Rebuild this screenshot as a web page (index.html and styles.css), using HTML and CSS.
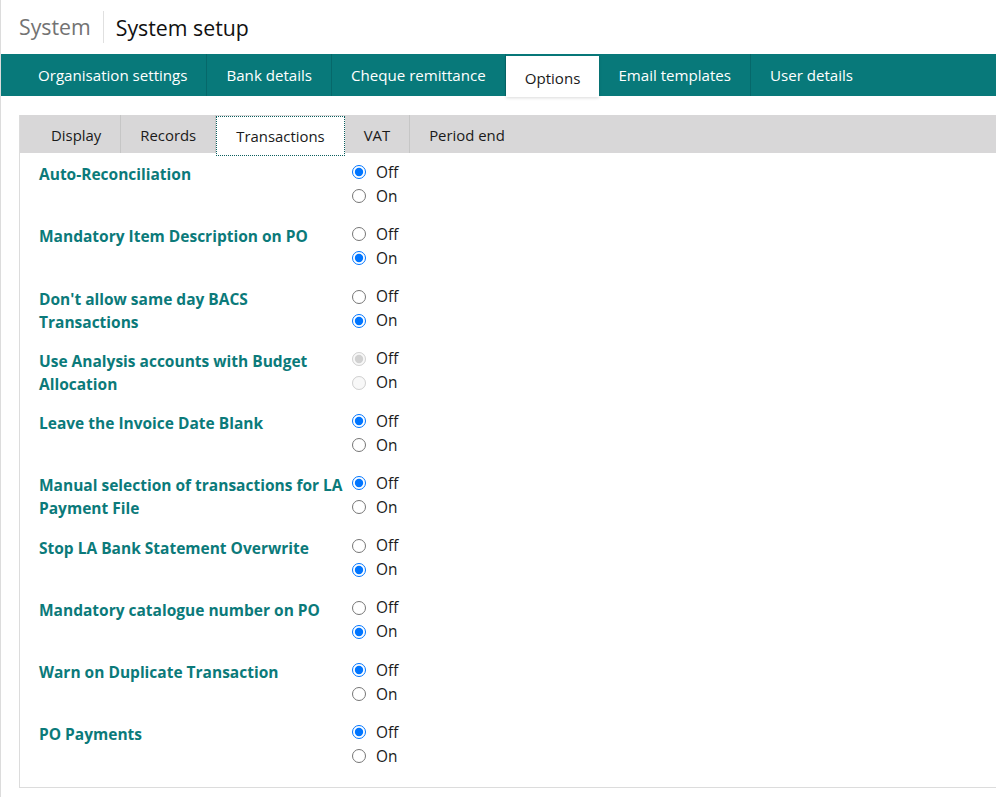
FILE: index.html
```html
<!DOCTYPE html>
<html>
    <head>
        <meta http-equiv=Content-Type content=text/html;charset=UTF-8>
        <title>System setup</title>
        <link rel="stylesheet" href="styles.css">
    </head>
    <body>
        <div class=page>
            <div class=header>
                <span class=section>System</span>
                <h1>System setup</h1>
            </div>
            <ul class=nav>
                <li>Organisation settings</li>
                <li>Bank details</li>
                <li>Cheque remittance</li>
                <li class=active>Options</li>
                <li>Email templates</li>
                <li>User details</li>
            </ul>
            <div class=panel>
                <ul class=subnav>
                    <li>Display</li>
                    <li>Records</li>
                    <li class=active>Transactions</li>
                    <li>VAT</li>
                    <li>Period end</li>
                </ul>
                <div class=options>
                    <div class=option>
                        <span class=name>Auto-Reconciliation</span>
                        <div class=choices>
                            <label><input type=radio name=o1 checked> Off</label>
                            <label><input type=radio name=o1> On</label>
                        </div>
                    </div>
                    <div class=option>
                        <span class=name>Mandatory Item Description on PO</span>
                        <div class=choices>
                            <label><input type=radio name=o2> Off</label>
                            <label><input type=radio name=o2 checked> On</label>
                        </div>
                    </div>
                    <div class=option>
                        <span class=name>Don't allow same day BACS Transactions</span>
                        <div class=choices>
                            <label><input type=radio name=o3> Off</label>
                            <label><input type=radio name=o3 checked> On</label>
                        </div>
                    </div>
                    <div class=option>
                        <span class=name>Use Analysis accounts with Budget Allocation</span>
                        <div class=choices>
                            <label><input type=radio name=o4 checked disabled> Off</label>
                            <label><input type=radio name=o4 disabled> On</label>
                        </div>
                    </div>
                    <div class=option>
                        <span class=name>Leave the Invoice Date Blank</span>
                        <div class=choices>
                            <label><input type=radio name=o5 checked> Off</label>
                            <label><input type=radio name=o5> On</label>
                        </div>
                    </div>
                    <div class=option>
                        <span class=name>Manual selection of transactions for LA Payment File</span>
                        <div class=choices>
                            <label><input type=radio name=o6 checked> Off</label>
                            <label><input type=radio name=o6> On</label>
                        </div>
                    </div>
                    <div class=option>
                        <span class=name>Stop LA Bank Statement Overwrite</span>
                        <div class=choices>
                            <label><input type=radio name=o7> Off</label>
                            <label><input type=radio name=o7 checked> On</label>
                        </div>
                    </div>
                    <div class=option>
                        <span class=name>Mandatory catalogue number on PO</span>
                        <div class=choices>
                            <label><input type=radio name=o8> Off</label>
                            <label><input type=radio name=o8 checked> On</label>
                        </div>
                    </div>
                    <div class=option>
                        <span class=name>Warn on Duplicate Transaction</span>
                        <div class=choices>
                            <label><input type=radio name=o9 checked> Off</label>
                            <label><input type=radio name=o9> On</label>
                        </div>
                    </div>
                    <div class=option>
                        <span class=name>PO Payments</span>
                        <div class=choices>
                            <label><input type=radio name=o10 checked> Off</label>
                            <label><input type=radio name=o10> On</label>
                        </div>
                    </div>
                </div>
            </div>
        </div>
    </body>
</html>
```

FILE: styles.css
```css
body {
    margin: 0;
    font: 15.4px "Open Sans", "Noto Sans", sans-serif;
    color: #1a1a1a;
}
.page {
    border-left: 1px solid #dcdcdc;
    min-height: 797px;
    box-sizing: border-box;
}
.header {
    display: flex;
    align-items: center;
    height: 54px;
    padding-left: 18px;
}
.section {
    font-size: 21.3px;
    color: #737373;
    padding-right: 12px;
    border-right: 1px solid #e0e0e0;
    line-height: 32px;
}
.header h1 {
    margin: 0 0 0 12px;
    font-size: 21.3px;
    font-weight: normal;
    color: #111;
}
.nav {
    display: flex;
    margin: 0;
    padding: 0 0 0 18px;
    list-style: none;
    height: 42px;
    background-color: #08797a;
    font-size: 15.1px;
}
.nav li {
    padding: 0 19px;
    line-height: 42px;
    color: white;
    border-right: 1px solid #06686a;
}
.nav li:last-child {
    border-right: none;
}
.nav li.active {
    background-color: white;
    color: #1a1a1a;
    margin-top: 2px;
    line-height: 44px;
    height: 41px;
    box-shadow: 0 1px 3px rgba(0, 0, 0, 0.15);
    border-right: none;
}
.panel {
    margin: 19px 0 0 18px;
    border-left: 1px solid #dcdcdc;
    border-bottom: 1px solid #dcdcdc;
}
.subnav {
    display: flex;
    margin: 0;
    padding: 0 0 0 12px;
    list-style: none;
    height: 38px;
    background-color: #d8d7d8;
    font-size: 14.9px;
}
.subnav li {
    padding: 0 19px;
    line-height: 41px;
    border-right: 1px solid #c6c6c6;
}
.subnav li:last-child {
    border-right: none;
}
.subnav li.active {
    background-color: white;
    border: 1px dotted #0b5e5e;
    margin-top: 1px;
    height: 38px;
    line-height: 39px;
}
.options {
    padding: 7px 0 4px 19px;
}
.option {
    display: grid;
    grid-template-columns: 313px auto;
    margin-bottom: 14.25px;
}
.name {
    font-size: 15.5px;
    font-weight: bold;
    color: #0b7a7a;
    line-height: 23px;
    padding: 3px 6px 0 0;
    margin-bottom: -1px;
}
.choices label {
    display: flex;
    align-items: center;
    height: 24px;
}
.choices input {
    margin: 0 10px 0 0;
    width: 14px;
    height: 14px;
}
```
